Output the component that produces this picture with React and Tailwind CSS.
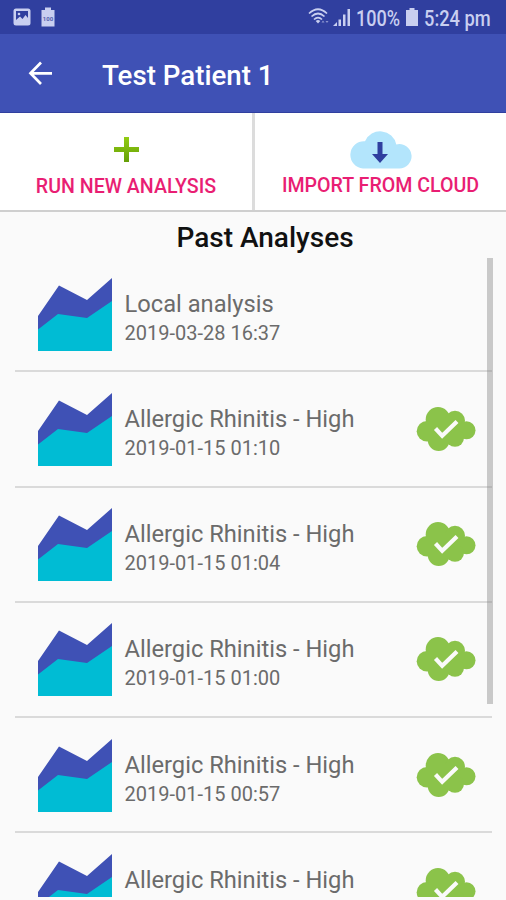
const analyses = [
  { id: 1, name: 'Local analysis', date: '2019-03-28 16:37', synced: false },
  { id: 2, name: 'Allergic Rhinitis - High', date: '2019-01-15 01:10', synced: true },
  { id: 3, name: 'Allergic Rhinitis - High', date: '2019-01-15 01:04', synced: true },
  { id: 4, name: 'Allergic Rhinitis - High', date: '2019-01-15 01:00', synced: true },
  { id: 5, name: 'Allergic Rhinitis - High', date: '2019-01-15 00:57', synced: true },
  { id: 6, name: 'Allergic Rhinitis - High', date: '', synced: true },
];

const AreaChartIcon = () => (
  <svg width="74" height="73" viewBox="0 0 74 73" className="shrink-0">
    <path d="M0 38 L21 7.500 L49 22 L74 0 V40 L0 60 Z" fill="#3f51b5" />
    <path d="M0 51.500 L20 36 L49 40 L74 23 V73 H0 Z" fill="#00bcd4" />
  </svg>
);

const SyncedIcon = () => (
  <svg width="60" height="46" viewBox="0 0 60 46">
    <g fill="#8bc34a">
      <circle cx="22" cy="13.400" r="12.300" />
      <circle cx="39" cy="14.800" r="10" />
      <circle cx="50.500" cy="24.300" r="9" />
      <circle cx="39" cy="31.800" r="9" />
      <circle cx="22.700" cy="34" r="11" />
      <circle cx="11" cy="25.300" r="10.300" />
      <rect x="14" y="12" width="30" height="24" />
    </g>
    <path d="M19.500 22.500 L26.200 29.800 L41 15.500" fill="none" stroke="#fafafa" strokeWidth="4.200" />
  </svg>
);

const StatusBar = () => (
  <div className="flex h-[34px] items-center bg-[#303f9f] pl-[13px] pr-[14px] text-[#c9cff0]">
    <svg width="18" height="18" viewBox="0 0 18 18">
      <rect x="0.500" y="0.500" width="17" height="17" rx="2.500" fill="currentColor" />
      <path d="M3 3 H15 V10 L12.500 7 L9.500 11 L7 8.500 L3 12 Z" fill="#303f9f" />
      <circle cx="6" cy="6" r="1.300" fill="currentColor" />
    </svg>
    <svg width="14" height="20" viewBox="0 0 14 20" className="ml-[10px]">
      <path d="M4 0.500 H10 V3 H13.500 V19.500 H0.500 V3 H4 Z" fill="currentColor" />
      <text x="7" y="13.500" textAnchor="middle" fontSize="6" fontWeight="700" fill="#5661ad">100</text>
    </svg>
    <svg width="22" height="18" viewBox="0 0 22 18" className="ml-auto">
      <g fill="none" stroke="currentColor" strokeWidth="1.700">
        <path d="M1 5.500 Q10 -3 19 5.500" />
        <path d="M3.500 8.500 Q10 2.500 16.500 8.500" />
        <path d="M6 11.500 Q10 7.500 14 11.500" />
      </g>
      <path d="M10 15.500 L7.700 13 Q10 11.200 12.300 13 Z" fill="currentColor" />
      <path d="M13.500 14.500 L15 12.500 L16.500 14.500 Z M17.500 13 L19 15 L20.500 13 Z" fill="currentColor" opacity="0.600" />
    </svg>
    <svg width="18" height="18" viewBox="0 0 18 18" className="ml-[3px]" fill="currentColor">
      <path d="M0 18 L4 14 V18 Z" />
      <rect x="5.500" y="11.500" width="2.500" height="6.500" />
      <rect x="10" y="6.500" width="2.500" height="11.500" />
      <rect x="14.500" y="1" width="2.500" height="17" />
    </svg>
    <span className="ml-[5px] w-[45px] whitespace-nowrap pt-[3px] text-[21.5px] font-medium leading-none">
      <span className="inline-block origin-left scale-x-[0.840]">100%</span>
    </span>
    <svg width="12" height="18" viewBox="0 0 12 18" className="ml-[5px]">
      <path d="M3.500 0 H8.500 V2 H12 V18 H0 V2 H3.500 Z" fill="currentColor" />
    </svg>
    <span className="ml-[6px] w-[68px] whitespace-nowrap pt-[3px] text-[21.5px] font-medium leading-none">
      <span className="inline-block origin-left scale-x-[0.850]">5:24 pm</span>
    </span>
  </div>
);

const AnalysisRow = ({ name, date, synced }) => (
  <li className="flex h-[115.3px] items-start border-b-[2.5px] border-[#dadada] pl-[23px] pt-[20.5px]">
    <AreaChartIcon />
    <div className="ml-[12.5px] flex-1 whitespace-nowrap pt-[10px] text-[#6b6b6b]">
      <div className="text-[23.7px] leading-[32px]">{name}</div>
      {date && <div className="text-[20px] leading-[27px]">{date}</div>}
    </div>
    {synced && (
      <div className="mr-[16px] pt-[13px]">
        <SyncedIcon />
      </div>
    )}
  </li>
);

const App = () => {
  return (
    <div className="relative flex h-[900px] w-[506px] flex-col overflow-hidden bg-[#fafafa] font-['Roboto',sans-serif]">
      <StatusBar />
      <header className="flex h-[79px] items-center border-b border-[#303f9f] bg-[#3f51b5] pl-[28px] text-white">
        <svg width="24" height="24" viewBox="0 0 24 24" fill="none" stroke="currentColor" strokeWidth="2.700">
          <path d="M13 1.500 L2.500 12.300 L13 23 M2.500 12.300 H24" />
        </svg>
        <h1 className="ml-[50px] pt-[6px] text-[27.7px] font-medium leading-none">Test Patient 1</h1>
      </header>

      <div className="flex h-[99px] gap-[3px] border-b-2 border-[#cfcfcf] bg-[#dcdcdc] text-[19.6px] font-medium text-[#e91e73]">
        <button className="flex w-[252px] flex-col items-center bg-white pt-[24px]">
          <svg width="25" height="25" viewBox="0 0 25 25">
            <defs>
              <linearGradient id="plus" x1="0" y1="0" x2="0" y2="1">
                <stop offset="0" stopColor="#92cc12" />
                <stop offset="1" stopColor="#659f08" />
              </linearGradient>
            </defs>
            <path d="M10 0 H15 V10 H25 V15 H15 V25 H10 V15 H0 V10 H10 Z" fill="url(#plus)" />
          </svg>
          <span className="mt-[13px] whitespace-nowrap leading-[24px]">RUN NEW ANALYSIS</span>
        </button>
        <button className="flex flex-1 flex-col items-center bg-white pt-[16px]">
          <svg width="64" height="40" viewBox="0 0 64 40">
            <path
              d="M14 39.500 A13.500 13.500 0 1 1 16 12.300 A16.500 16.500 0 0 1 47.300 15.500 A12.200 12.200 0 1 1 50 39.500 Z"
              fill="#b3e5fc"
            />
            <path d="M28.500 13 H33.500 V25 H39 L31 34 L23 25 H28.500 Z" fill="#303f9f" />
          </svg>
          <span className="mt-[5px] whitespace-nowrap leading-[24px]">IMPORT FROM CLOUD</span>
        </button>
      </div>

      <h2 className="h-[45px] pl-[24px] pt-[10px] text-center text-[28px] font-medium leading-[32px] text-[#111111]">Past Analyses</h2>

      <ul className="mx-[15px] mr-[14px] h-[640px] overflow-hidden">
        {analyses.map((item) => (
          <AnalysisRow key={item.id} {...item} />
        ))}
      </ul>

      {/* scrollbar thumb overlays the list edge */}
      <div className="absolute right-[13px] top-[258px] h-[446px] w-[6px] bg-[#7f7f7f]/40" />
    </div>
  );
};

export default App;
